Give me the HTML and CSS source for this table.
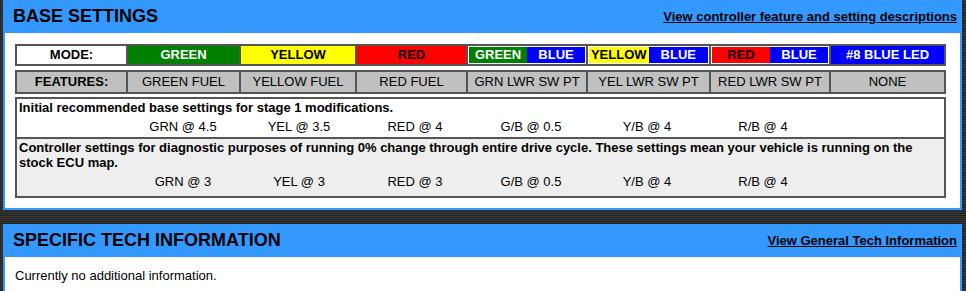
FILE: index.html
```html
<!DOCTYPE html>
<html lang="en">
<head>
<meta charset="utf-8">
<title>Controller Settings</title>
<link rel="stylesheet" href="styles.css">
</head>
<body>
  <section class="panel">
    <header class="panel-head">
      <h2 class="panel-title">BASE SETTINGS</h2>
      <a class="panel-link" href="#">View controller feature and setting descriptions</a>
    </header>
    <div class="panel-body">
      <div class="settings">
        <div class="grid-row mode-row">
          <div class="cell label">MODE:</div>
          <div class="cell green">GREEN</div>
          <div class="cell yellow">YELLOW</div>
          <div class="cell red">RED</div>
          <div class="cell split"><span class="half green">GREEN</span><span class="half blue">BLUE</span></div>
          <div class="cell split"><span class="half yellow">YELLOW</span><span class="half blue">BLUE</span></div>
          <div class="cell split"><span class="half red">RED</span><span class="half blue">BLUE</span></div>
          <div class="cell blue">#8 BLUE LED</div>
        </div>
        <div class="grid-row feature-row">
          <div class="cell label">FEATURES:</div>
          <div class="cell">GREEN FUEL</div>
          <div class="cell">YELLOW FUEL</div>
          <div class="cell">RED FUEL</div>
          <div class="cell">GRN LWR SW PT</div>
          <div class="cell">YEL LWR SW PT</div>
          <div class="cell">RED LWR SW PT</div>
          <div class="cell">NONE</div>
        </div>
        <div class="notes">
          <div class="note">
            <p class="note-title">Initial recommended base settings for stage 1 modifications.</p>
            <div class="values">
              <span></span>
              <span>GRN @ 4.5</span>
              <span>YEL @ 3.5</span>
              <span>RED @ 4</span>
              <span>G/B @ 0.5</span>
              <span>Y/B @ 4</span>
              <span>R/B @ 4</span>
              <span></span>
            </div>
          </div>
          <div class="note alt">
            <p class="note-title">Controller settings for diagnostic purposes of running 0% change through entire drive cycle. These settings mean your vehicle is running on the stock ECU map.</p>
            <div class="values">
              <span></span>
              <span>GRN @ 3</span>
              <span>YEL @ 3</span>
              <span>RED @ 3</span>
              <span>G/B @ 0.5</span>
              <span>Y/B @ 4</span>
              <span>R/B @ 4</span>
              <span></span>
            </div>
          </div>
        </div>
      </div>
    </div>
  </section>

  <section class="panel">
    <header class="panel-head">
      <h2 class="panel-title">SPECIFIC TECH INFORMATION</h2>
      <a class="panel-link" href="#">View General Tech Information</a>
    </header>
    <div class="panel-body info-body">
      <p class="info-text">Currently no additional information.</p>
    </div>
  </section>
</body>
</html>
```

FILE: styles.css
```css
html, body {
  margin: 0;
  padding: 0;
}

body {
  font-family: "Liberation Sans", Arial, sans-serif;
  font-size: 13px;
  line-height: 15px;
  color: #000;
  background: repeating-linear-gradient(to bottom, #383838 0, #383838 1px, #232323 1px, #232323 2px);
  min-height: 291px;
}

/* Blue framed panel */
.panel {
  margin: 0 4px 14px 3px;
  border: 2px solid #3399ff;
  background: #fff;
}

.panel-head {
  height: 31px;
  background: #3399ff;
  display: flex;
  justify-content: space-between;
  align-items: flex-start;
  padding: 0 3px 0 8px;
}

.panel-title {
  margin: 4px 0 0;
  font-size: 18px;
  line-height: 20px;
  font-weight: bold;
}

.panel-link {
  margin-top: 7px;
  font-size: 13px;
  line-height: 15px;
  font-weight: bold;
  color: #000;
  text-decoration: underline;
}

.panel-body {
  padding: 11px 0 10px 10px;
}

/* Mode / feature grid */
.settings {
  width: 931px;
}

.grid-row {
  display: grid;
  grid-template-columns: 111px 113px 116px 111px 120px 123px 120px 115px;
  border: 1px solid #555;
}

.mode-row {
  margin-bottom: 4px;
}

.feature-row {
  margin-bottom: 3px;
}

.cell {
  box-sizing: border-box;
  border: 1px solid #555;
  text-align: center;
  white-space: nowrap;
}

.mode-row .cell {
  height: 20px;
  line-height: 18px;
  font-weight: bold;
}

.feature-row .cell {
  height: 22px;
  line-height: 20px;
  background: #c0c0c0;
}

.feature-row .label {
  font-weight: bold;
}

.mode-row .label {
  background: #fff;
}

.green { background: #008000; color: #fff; }
.yellow { background: #ffff00; color: #000; }
.red { background: #ff0000; color: #000; }
.blue { background: #0000ff; color: #fff; }

.cell.split {
  display: flex;
  padding: 1px;
  background: #fff;
}

.half {
  flex: 1 1 0;
  line-height: 16px;
  height: 16px;
}

/* Recommended settings notes */
.notes {
  border: 1px solid #555;
}

.note {
  border: 1px solid #555;
  padding: 1px 2px 3px;
  background: #fff;
}

.note.alt {
  background: #eeeeee;
  padding-bottom: 7px;
}

.note-title {
  margin: 0;
  font-weight: bold;
}

.values {
  display: grid;
  grid-template-columns: 106px repeat(7, 116px);
  margin-top: 4px;
  text-align: center;
  white-space: nowrap;
}

/* Tech information */
.info-body {
  padding: 11px 10px 30px;
}

.info-text {
  margin: 0;
}
```
